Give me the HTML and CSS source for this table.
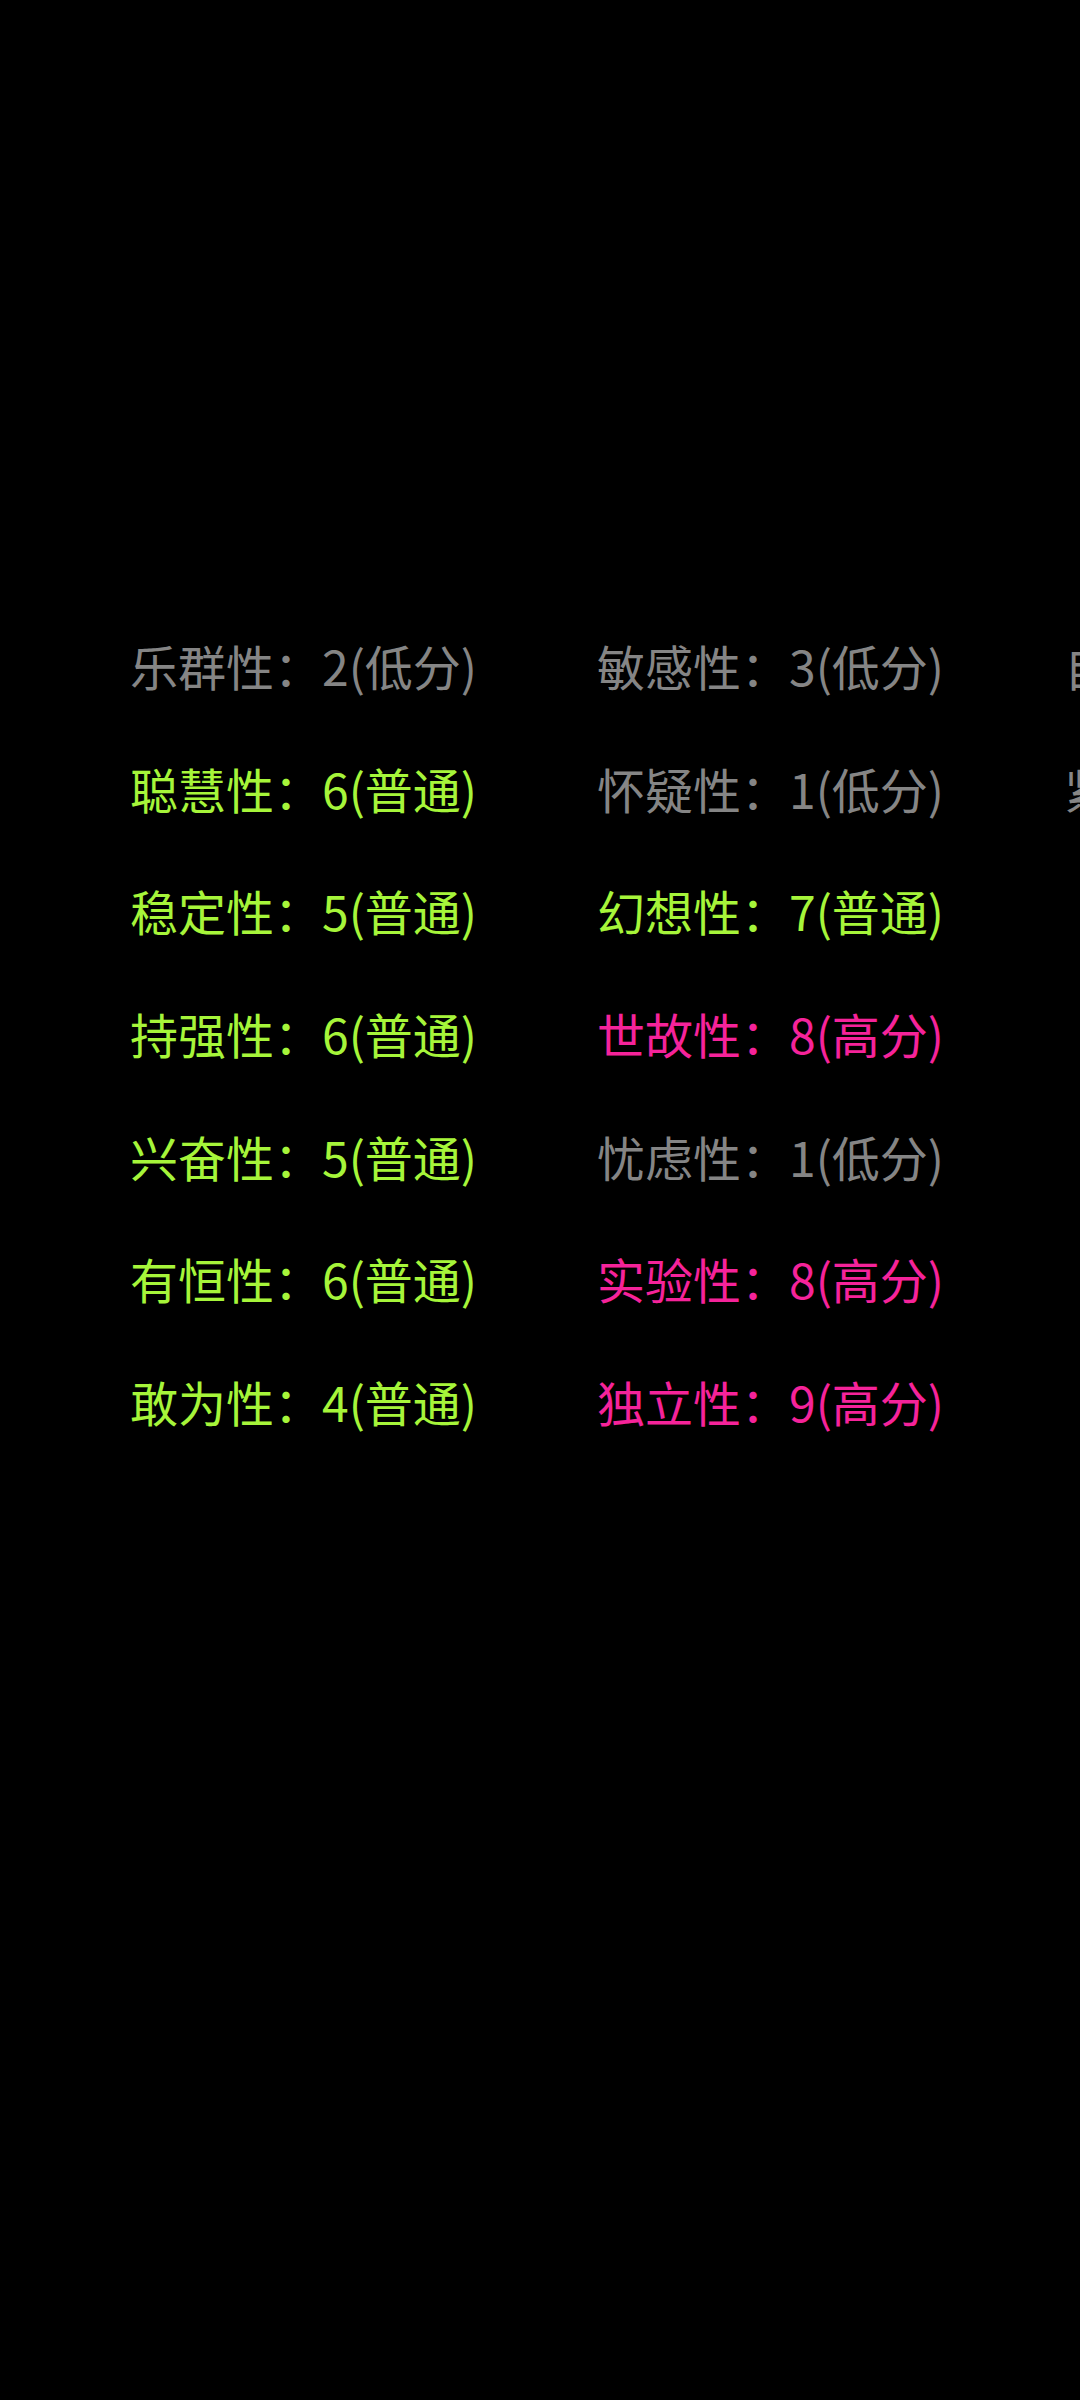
FILE: index.html
```html
<!DOCTYPE html>
<html lang="zh-CN">
<head>
    <meta charset="UTF-8">
    <meta name="viewport" content="width=device-width, initial-scale=1.0">
    <title>16PF</title>
    <link rel="stylesheet" href="styles.css">
</head>
<body>
    <div class="screen">
        <div class="factor-grid">
            <div class="factor low">乐群性：2(低分)</div>
            <div class="factor mid">聪慧性：6(普通)</div>
            <div class="factor mid">稳定性：5(普通)</div>
            <div class="factor mid">持强性：6(普通)</div>
            <div class="factor mid">兴奋性：5(普通)</div>
            <div class="factor mid">有恒性：6(普通)</div>
            <div class="factor mid">敢为性：4(普通)</div>

            <div class="factor low">敏感性：3(低分)</div>
            <div class="factor low">怀疑性：1(低分)</div>
            <div class="factor mid">幻想性：7(普通)</div>
            <div class="factor high">世故性：8(高分)</div>
            <div class="factor low">忧虑性：1(低分)</div>
            <div class="factor high">实验性：8(高分)</div>
            <div class="factor high">独立性：9(高分)</div>

            <div class="factor low">自律性：3(低分)</div>
            <div class="factor low">紧张性：7(高分)</div>
        </div>
    </div>
</body>
</html>
```

FILE: styles.css
```css
html, body {
    margin: 0;
    padding: 0;
    background-color: #000;
}

.screen {
    width: 1080px;
    height: 2400px;
    overflow: hidden;
    font-family: "Noto Sans CJK SC", "Noto Sans", sans-serif;
}

.factor-grid {
    display: grid;
    grid-auto-flow: column;
    grid-template-rows: repeat(7, 48px);
    grid-template-columns: repeat(3, 467px);
    row-gap: 74.7px;
    padding: 641px 0 0 130px;
}

.factor {
    font-size: 48px;
    line-height: 48px;
    white-space: nowrap;
}

.low {
    color: #858585;
}

.mid {
    color: #a6f53a;
}

.high {
    color: #f5239a;
}
```
